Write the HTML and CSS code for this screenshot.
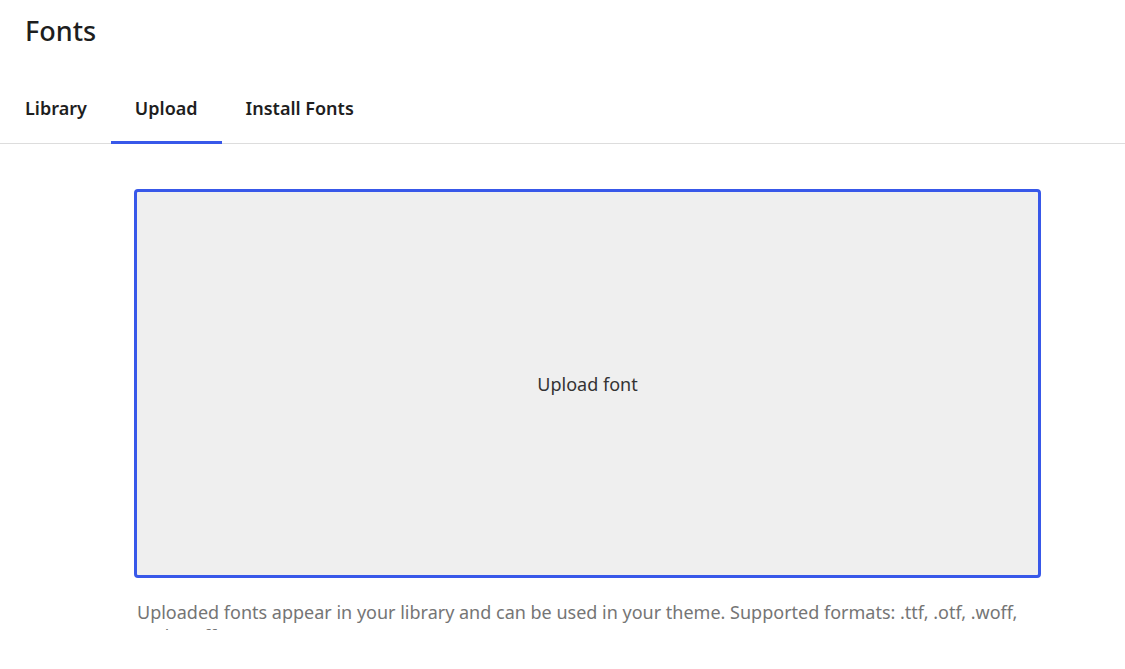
FILE: index.html
```html
<!DOCTYPE html>
<html lang="en">
<head>
    <meta charset="UTF-8">
    <meta name="viewport" content="width=device-width, initial-scale=1.0">
    <title>Fonts</title>
    <link rel="stylesheet" href="styles.css">
</head>
<body>
    <h1 class="page-title">Fonts</h1>

    <nav class="tabs">
        <button class="tab">Library</button>
        <button class="tab active">Upload</button>
        <button class="tab">Install Fonts</button>
    </nav>

    <div class="panel">
        <div class="upload-box">
            <span>Upload font</span>
        </div>
        <p class="help">
            Uploaded fonts appear in your library and can be used in your theme. Supported formats: .ttf, .otf, .woff, and .woff2.
        </p>
    </div>
</body>
</html>
```

FILE: styles.css
```css
body {
    margin: 0;
    font-family: "Noto Sans", "Open Sans", sans-serif;
    background: #fff;
    color: #1e1e1e;
}
.page-title {
    margin: 0;
    padding: 12px 25px 0;
    font-size: 27px;
    font-weight: 500;
    line-height: 38px;
}
.tabs {
    display: flex;
    margin-top: 38px;
    border-bottom: 1px solid #dddddd;
}
.tab {
    font-family: inherit;
    font-size: 18px;
    font-weight: 600;
    color: #1e1e1e;
    background: none;
    border: none;
    border-bottom: 3px solid transparent;
    padding: 8px 24px 21px;
    margin-bottom: -1px;
    cursor: pointer;
}
.tab:first-child {
    padding-left: 25px;
}
.tab.active {
    border-bottom-color: #3858e9;
}
.panel {
    padding: 45px 0 0 134px;
    height: 441px;
    overflow: hidden;
}
.upload-box {
    width: 907px;
    height: 389px;
    box-sizing: border-box;
    border: 3px solid #3858e9;
    border-radius: 4px;
    background: #efefef;
    display: flex;
    align-items: center;
    justify-content: center;
    font-size: 18px;
    color: #333;
}
.help {
    width: 904px;
    margin: 22px 0 0 3px;
    font-size: 18px;
    line-height: 24px;
    color: #757575;
}
```
